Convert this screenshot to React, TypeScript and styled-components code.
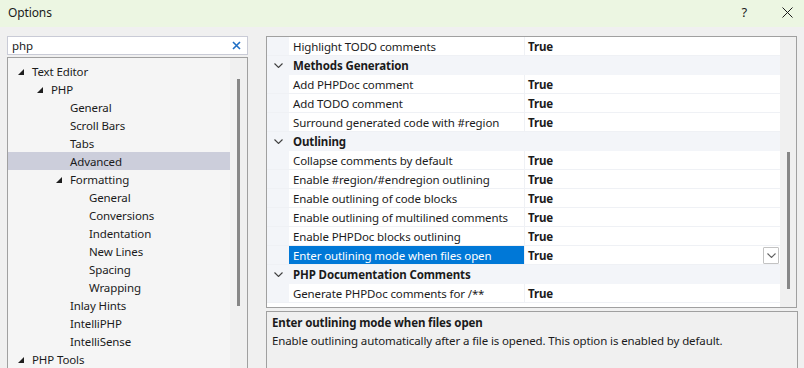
import styled, { createGlobalStyle } from 'styled-components'

const GlobalStyle = createGlobalStyle`
  html, body {
    margin: 0;
    padding: 0;
    background: #f0f0f0;
    overflow: hidden;
  }
  body {
    font-family: "Noto Sans", "Liberation Sans", sans-serif;
    font-size: 11.5px;
    letter-spacing: -0.12px;
    color: #1b1b1b;
  }
`

type TreeItem = { label: string; depth: number; open?: boolean; selected?: boolean }

const tree: TreeItem[] = [
  { label: 'Text Editor', depth: 0, open: true },
  { label: 'PHP', depth: 1, open: true },
  { label: 'General', depth: 2 },
  { label: 'Scroll Bars', depth: 2 },
  { label: 'Tabs', depth: 2 },
  { label: 'Advanced', depth: 2, selected: true },
  { label: 'Formatting', depth: 2, open: true },
  { label: 'General', depth: 3 },
  { label: 'Conversions', depth: 3 },
  { label: 'Indentation', depth: 3 },
  { label: 'New Lines', depth: 3 },
  { label: 'Spacing', depth: 3 },
  { label: 'Wrapping', depth: 3 },
  { label: 'Inlay Hints', depth: 2 },
  { label: 'IntelliPHP', depth: 2 },
  { label: 'IntelliSense', depth: 2 },
  { label: 'PHP Tools', depth: 0, open: true },
]

type GridRow =
  | { kind: 'category'; label: string }
  | { kind: 'prop'; label: string; value: string; selected?: boolean }

const rows: GridRow[] = [
  { kind: 'prop', label: 'Highlight TODO comments', value: 'True' },
  { kind: 'category', label: 'Methods Generation' },
  { kind: 'prop', label: 'Add PHPDoc comment', value: 'True' },
  { kind: 'prop', label: 'Add TODO comment', value: 'True' },
  { kind: 'prop', label: 'Surround generated code with #region', value: 'True' },
  { kind: 'category', label: 'Outlining' },
  { kind: 'prop', label: 'Collapse comments by default', value: 'True' },
  { kind: 'prop', label: 'Enable #region/#endregion outlining', value: 'True' },
  { kind: 'prop', label: 'Enable outlining of code blocks', value: 'True' },
  { kind: 'prop', label: 'Enable outlining of multilined comments', value: 'True' },
  { kind: 'prop', label: 'Enable PHPDoc blocks outlining', value: 'True' },
  { kind: 'prop', label: 'Enter outlining mode when files open', value: 'True', selected: true },
  { kind: 'category', label: 'PHP Documentation Comments' },
  { kind: 'prop', label: 'Generate PHPDoc comments for /**', value: 'True' },
]

function Expander() {
  return (
    <svg width="6" height="6" viewBox="0 0 6 6">
      <polygon points="6,0 6,6 0,6" fill="#1e1e1e" />
    </svg>
  )
}

function Chevron({ color = '#404040' }: { color?: string }) {
  return (
    <svg width="9" height="5" viewBox="0 0 9 5">
      <polyline points="0.5,0.5 4.5,4.5 8.5,0.5" fill="none" stroke={color} strokeWidth="1.1" />
    </svg>
  )
}

export default function App() {
  return (
    <Window>
      <GlobalStyle />
      <TitleBar>
        <Title>Options</Title>
        <TitleButtons>
          <Help>?</Help>
          <svg width="11" height="11" viewBox="0 0 11 11">
            <path d="M0.5 0.5 L10.5 10.5 M10.5 0.5 L0.5 10.5" stroke="#1b1b1b" strokeWidth="1" />
          </svg>
        </TitleButtons>
      </TitleBar>
      <Body>
        <LeftColumn>
          <SearchBox>
            <SearchText>php</SearchText>
            <svg width="9" height="9" viewBox="0 0 9 9">
              <path d="M1 1 L8 8 M8 1 L1 8" stroke="#1f6fc5" strokeWidth="1.6" />
            </svg>
          </SearchBox>
          <TreePanel>
            <TreeList>
              {tree.map((item, i) => (
                <TreeRow key={i} $depth={item.depth} $selected={item.selected}>
                  <ExpanderBox>{item.open && <Expander />}</ExpanderBox>
                  {item.label}
                </TreeRow>
              ))}
            </TreeList>
            <TreeScroll>
              <TreeThumb />
            </TreeScroll>
          </TreePanel>
        </LeftColumn>
        <RightColumn>
          <GridPanel>
            <GridRows>
              {rows.map((row, i) =>
                row.kind === 'category' ? (
                  <CategoryRow key={i}>
                    <Gutter>
                      <Chevron />
                    </Gutter>
                    <CategoryLabel>{row.label}</CategoryLabel>
                  </CategoryRow>
                ) : (
                  <PropRow key={i}>
                    <Gutter />
                    <NameCell $selected={row.selected}>{row.label}</NameCell>
                    <ValueCell>
                      {row.value}
                      {row.selected && (
                        <DropButton>
                          <Chevron color="#606060" />
                        </DropButton>
                      )}
                    </ValueCell>
                  </PropRow>
                )
              )}
            </GridRows>
            <GridScroll>
              <GridThumb />
            </GridScroll>
          </GridPanel>
          <DescPanel>
            <DescTitle>Enter outlining mode when files open</DescTitle>
            <DescText>Enable outlining automatically after a file is opened. This option is enabled by default.</DescText>
          </DescPanel>
        </RightColumn>
      </Body>
    </Window>
  )
}

const Window = styled.div`
  width: 804px;
  height: 368px;
  display: flex;
  flex-direction: column;
  overflow: hidden;
`

const TitleBar = styled.div`
  height: 27px;
  flex-shrink: 0;
  background: #ecf6e2;
  display: flex;
  align-items: center;
  justify-content: space-between;
  padding: 0 11px 0 8px;
`

const Title = styled.span`
  font-size: 12px;
  margin-top: -3px;
`

const TitleButtons = styled.div`
  display: flex;
  align-items: center;
  gap: 35px;
  margin-top: -3px;
`

const Help = styled.span`
  font-size: 13px;
`

const Body = styled.div`
  flex: 1;
  display: flex;
  gap: 18px;
  padding: 9px 6px 0 7px;
  min-height: 0;
`

const LeftColumn = styled.div`
  width: 241px;
  display: flex;
  flex-direction: column;
  gap: 2px;
`

const SearchBox = styled.div`
  height: 19px;
  border: 1px solid #c9cbd6;
  background: #fff;
  display: flex;
  align-items: center;
  justify-content: space-between;
  padding: 0 6px 0 4px;
`

const SearchText = styled.span`
  margin-top: -1px;
`

const TreePanel = styled.div`
  flex: 1;
  border: 1px solid #a0a0a0;
  border-bottom: none;
  background: #f5f5f5;
  display: flex;
`

const TreeList = styled.div`
  flex: 1;
  padding-top: 4px;
`

const TreeRow = styled.div<{ $depth: number; $selected?: boolean }>`
  height: 18px;
  display: flex;
  align-items: center;
  padding-left: ${p => 10 + p.$depth * 19}px;
  background: ${p => (p.$selected ? '#cccedb' : 'transparent')};
  white-space: nowrap;
`

const ExpanderBox = styled.span`
  width: 14px;
  display: flex;
  align-items: center;
  margin-top: 1px;
`

const TreeScroll = styled.div`
  width: 17px;
  background: #f0f0f0;
  display: flex;
  justify-content: center;
  padding-top: 21px;
`

const TreeThumb = styled.div`
  width: 3px;
  height: 227px;
  background: #868686;
`

const RightColumn = styled.div`
  flex: 1;
  display: flex;
  flex-direction: column;
  gap: 3px;
`

const GridPanel = styled.div`
  height: 270px;
  border: 1px solid #a0a0a0;
  background: #fff;
  display: flex;
  margin-right: 1px;
`

const GridRows = styled.div`
  flex: 1;
`

const Gutter = styled.div`
  width: 21px;
  flex-shrink: 0;
  background: #f3f5f9;
  display: flex;
  align-items: center;
  justify-content: center;
  padding-left: 1px;
`

const CategoryRow = styled.div`
  height: 18px;
  border-bottom: 1px solid #f3f5f9;
  background: #f3f5f9;
  display: flex;
`

const CategoryLabel = styled.div`
  font-weight: bold;
  padding-left: 4px;
  display: flex;
  align-items: center;
`

const PropRow = styled.div`
  height: 18px;
  border-bottom: 1px solid #eff1f5;
  display: flex;
`

const NameCell = styled.div<{ $selected?: boolean }>`
  width: 231px;
  padding-left: 4px;
  display: flex;
  align-items: center;
  white-space: nowrap;
  background: ${p => (p.$selected ? '#0078d7' : '#fff')};
  color: ${p => (p.$selected ? '#fff' : '#1b1b1b')};
  border-right: 1px solid #eff1f5;
`

const ValueCell = styled.div`
  flex: 1;
  display: flex;
  align-items: center;
  justify-content: space-between;
  padding-left: 3px;
  font-weight: bold;
`

const DropButton = styled.div`
  width: 14px;
  height: 15px;
  border: 1px solid #c3c3c3;
  border-radius: 1px;
  background: #fff;
  display: flex;
  align-items: center;
  justify-content: center;
  margin-right: 1px;
`

const GridScroll = styled.div`
  width: 16px;
  background: #f0f0f0;
  display: flex;
  justify-content: center;
  padding-top: 115px;
`

const GridThumb = styled.div`
  width: 3px;
  height: 137px;
  background: #868686;
`

const DescPanel = styled.div`
  flex: 1;
  border: 1px solid #a0a0a0;
  border-bottom: none;
  background: #f0f0f0;
  padding: 2px 5px 0;
`

const DescTitle = styled.div`
  font-weight: bold;
  line-height: 18px;
`

const DescText = styled.div`
  line-height: 18px;
`
